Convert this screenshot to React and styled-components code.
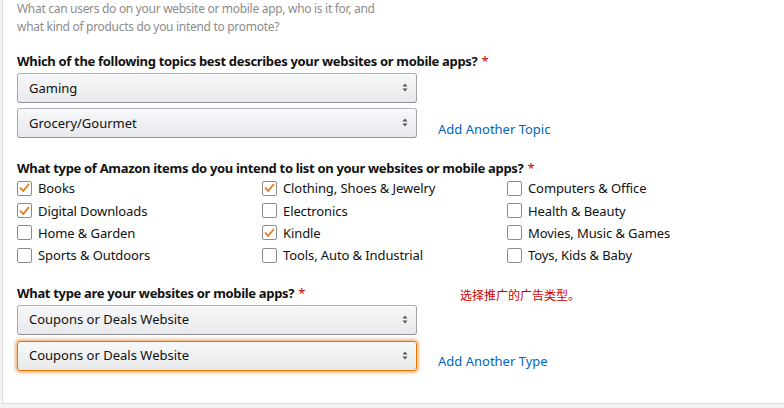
import React from "react";
import styled, { createGlobalStyle } from "styled-components";

const GlobalStyle = createGlobalStyle`
  html, body {
    margin: 0;
    padding: 0;
    background: #f3f3f3;
  }
  body {
    font-family: "Noto Sans", "Open Sans", Arial, sans-serif;
    color: #111;
  }
`;

const Panel = styled.div`
  margin-left: 2px;
  height: 404px;
  box-sizing: border-box;
  background: #fff;
  border-left: 1px solid #ddd;
  border-bottom: 1px solid #ddd;
  padding: 0 0 0 14px;
`;

const Intro = styled.p`
  margin: 0;
  font-size: 12px;
  line-height: 18px;
  letter-spacing: -0.3px;
  color: #8c8c8c;
`;

const Question = styled.div`
  margin-top: ${(p) => p.gap}px;
  font-size: 13px;
  font-weight: 700;
  line-height: 18px;
  letter-spacing: -0.32px;
  color: #111;
`;

const Required = styled.span`
  color: #c40000;
  margin-left: 4px;
  font-weight: 400;
`;

const QuestionRow = styled.div`
  display: flex;
  align-items: center;
  height: 18px;
  margin-top: ${(p) => p.gap}px;

  & > ${Question} {
    flex: 0 0 443px;
  }
`;

const Note = styled.span`
  font-family: "Noto Sans CJK SC", sans-serif;
  font-size: 12px;
  line-height: 18px;
  transform: translateY(2px);
  color: #d00000;
`;

const SelectRow = styled.div`
  display: flex;
  align-items: center;
  gap: 21px;
  margin-top: ${(p) => p.gap}px;
`;

const Select = styled.div`
  width: 400px;
  height: 30px;
  box-sizing: border-box;
  display: flex;
  align-items: center;
  justify-content: space-between;
  padding: 0 8px 1px 11px;
  font-size: 13px;
  color: #111;
  border-radius: 3px;
  border: 1px solid;
  border-color: ${(p) => (p.focused ? "#e77600" : "#adb1b8 #a2a6ac #8d9096")};
  background: linear-gradient(to bottom, #f7f8fa, #e7e9ec);
  box-shadow: ${(p) =>
    p.focused
      ? "0 0 3px 2px rgba(228, 121, 17, 0.5)"
      : "0 1px 0 rgba(255, 255, 255, 0.6) inset"};
`;

const AddLink = styled.a`
  font-size: 13px;
  color: #0066c0;
  text-decoration: none;
  margin-top: 11px;
`;

const Grid = styled.div`
  display: grid;
  grid-template-columns: 245px 245px 245px;
  grid-auto-rows: 22.4px;
`;

const Option = styled.label`
  display: flex;
  align-items: center;
  gap: 6px;
  font-size: 13px;
  letter-spacing: -0.1px;
  color: #111;
`;

const Box = styled.span`
  width: 15px;
  height: 15px;
  box-sizing: border-box;
  border: 1px solid #8c8c8c;
  border-radius: 2px;
  background: #fff;
  display: flex;
  align-items: center;
  justify-content: center;
`;

const Arrows = () => (
  <svg width="6" height="9" viewBox="0 0 6 9">
    <path d="M3 0.5 L5.5 3.5 H0.5 Z M3 8.5 L5.5 5.5 H0.5 Z" fill="#555" />
  </svg>
);

const Check = () => (
  <svg width="11" height="10" viewBox="0 0 11 10">
    <path
      d="M1.5 5.2 L4.2 8 L9.5 1.5"
      fill="none"
      stroke="#e47911"
      strokeWidth="1.8"
      strokeLinecap="round"
      strokeLinejoin="round"
    />
  </svg>
);

const items = [
  ["Books", true],
  ["Clothing, Shoes & Jewelry", true],
  ["Computers & Office", false],
  ["Digital Downloads", true],
  ["Electronics", false],
  ["Health & Beauty", false],
  ["Home & Garden", false],
  ["Kindle", true],
  ["Movies, Music & Games", false],
  ["Sports & Outdoors", false],
  ["Tools, Auto & Industrial", false],
  ["Toys, Kids & Baby", false],
];

const Dropdown = ({ value, focused }) => (
  <Select focused={focused}>
    <span>{value}</span>
    <Arrows />
  </Select>
);

export default function App() {
  return (
    <>
      <GlobalStyle />
      <Panel>
        <Intro>
          What can users do on your website or mobile app, who is it for, and
          <br />
          what kind of products do you intend to promote?
        </Intro>

        <Question gap={16}>
          Which of the following topics best describes your websites or mobile
          apps?<Required>*</Required>
        </Question>
        <SelectRow gap={3}>
          <Dropdown value="Gaming" />
        </SelectRow>
        <SelectRow gap={5}>
          <Dropdown value="Grocery/Gourmet" />
          <AddLink href="#">Add Another Topic</AddLink>
        </SelectRow>

        <Question gap={21}>
          What type of Amazon items do you intend to list on your websites or
          mobile apps?<Required>*</Required>
        </Question>
        <Grid>
          {items.map(([label, checked]) => (
            <Option key={label}>
              <Box>{checked && <Check />}</Box>
              {label}
            </Option>
          ))}
        </Grid>

        <QuestionRow gap={17}>
          <Question gap={0}>
            What type are your websites or mobile apps?<Required>*</Required>
          </Question>
          <Note>选择推广的广告类型。</Note>
        </QuestionRow>
        <SelectRow gap={3}>
          <Dropdown value="Coupons or Deals Website" />
        </SelectRow>
        <SelectRow gap={6}>
          <Dropdown value="Coupons or Deals Website" focused />
          <AddLink href="#">Add Another Type</AddLink>
        </SelectRow>
      </Panel>
    </>
  );
}
